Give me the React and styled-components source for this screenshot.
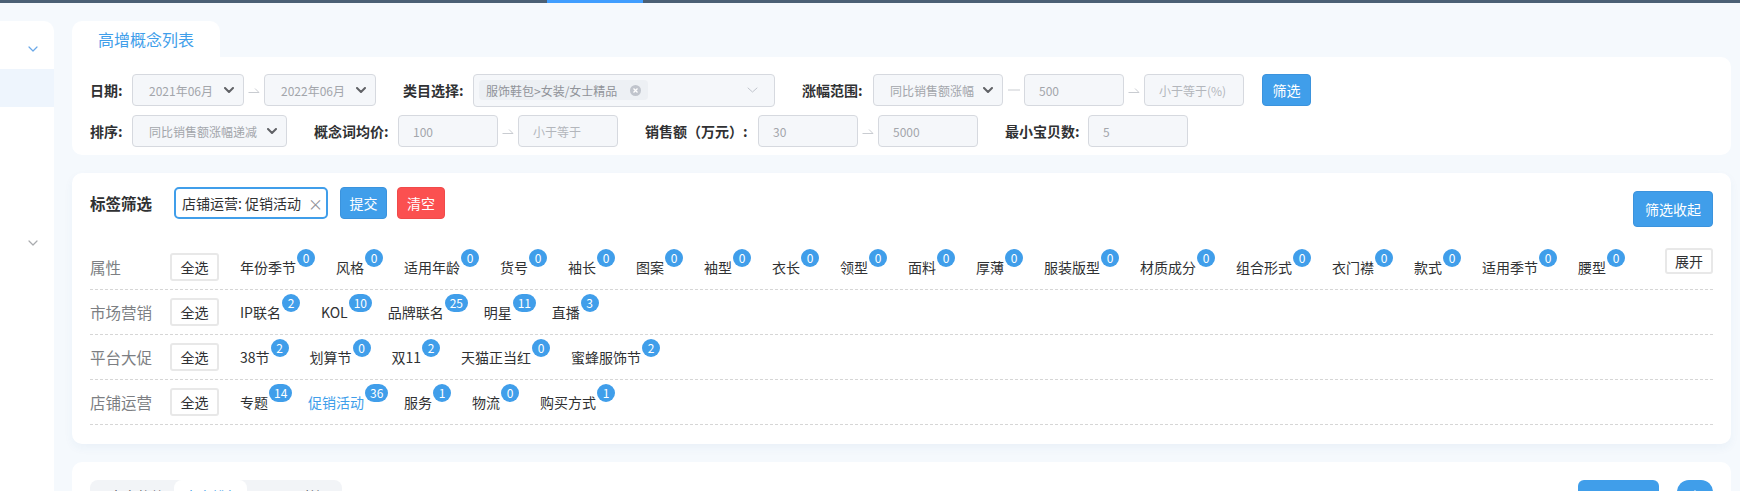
import React from 'react';
import styled, { createGlobalStyle } from 'styled-components';

const Global = createGlobalStyle`
  html, body { margin: 0; padding: 0; background: #f5f9fd; }
  body { font-family: "Noto Sans CJK SC", "Noto Sans", sans-serif; overflow: hidden; }
  * { box-sizing: border-box; }
`;

const Page = styled.div`
  width: 1740px;
  height: 491px;
  overflow: hidden;
  display: flex;
  flex-direction: column;
  background: #f5f9fd;
`;

const TopBar = styled.div`
  height: 3px;
  flex-shrink: 0;
  display: flex;
  background: #4b6075;
`;

const TopBarSeg = styled.div`
  width: ${p => p.$w}px;
  background: ${p => (p.$active ? '#409eff' : 'transparent')};
`;

const Body = styled.div`
  flex: 1;
  display: flex;
  gap: 18px;
  padding: 18px 9px 0 0;
  min-height: 0;
`;

const Sidebar = styled.div`
  width: 54px;
  flex-shrink: 0;
  background: #fff;
  border-top-right-radius: 10px;
  display: flex;
  flex-direction: column;
`;

const SideRow = styled.div`
  height: ${p => p.$h}px;
  flex-shrink: 0;
  padding-top: ${p => p.$pt || 0}px;
  padding-right: 16px;
  display: flex;
  align-items: center;
  justify-content: flex-end;
  background: ${p => (p.$active ? '#eef5fd' : 'transparent')};
`;

const Main = styled.div`
  flex: 1;
  display: flex;
  flex-direction: column;
  min-width: 0;
  & > * { flex-shrink: 0; }
`;

const Tab = styled.div`
  align-self: flex-start;
  width: 148px;
  height: 36px;
  background: #fff;
  border-radius: 10px 10px 0 0;
  display: flex;
  align-items: center;
  justify-content: center;
  color: #409eea;
  font-size: 16px;
`;

const FilterPanel = styled.div`
  background: #fff;
  border-radius: 0 10px 10px 10px;
  padding: 17px 18px 8px;
  display: flex;
  flex-direction: column;
  gap: 9px;
`;

const FormRow = styled.div`
  display: flex;
  align-items: center;
  height: 32px;
  gap: 27px;
`;

const Field = styled.div`
  display: flex;
  align-items: center;
  gap: 8px;
`;

const Label = styled.span`
  width: ${p => p.$w}px;
  flex-shrink: 0;
  font-size: 14px;
  font-weight: 700;
  color: #303133;
  white-space: nowrap;
`;

const Range = styled.div`
  display: flex;
  align-items: center;
`;

const Joiner = styled.span`
  width: ${p => p.$w || 20}px;
  display: flex;
  align-items: center;
  justify-content: center;
`;

const SelectBox = styled.div`
  width: ${p => p.$w}px;
  height: 32px;
  border: 1px solid #d6d9df;
  border-radius: 4px;
  background: #f5f7fa;
  display: flex;
  align-items: center;
  justify-content: space-between;
  padding: 0 9px 0 16px;
  font-size: 12px;
  color: #a3a6ab;
  white-space: nowrap;
`;

const InputBox = styled.div`
  width: 100px;
  height: 32px;
  border: 1px solid #d6d9df;
  border-radius: 4px;
  background: #f5f7fa;
  display: flex;
  align-items: center;
  padding-left: 14px;
  font-size: 12px;
  color: ${p => (p.$placeholder ? '#b3b6bc' : '#a3a6ab')};
  white-space: nowrap;
`;

const CategoryBox = styled.div`
  width: 302px;
  height: 33px;
  border: 1px solid #d6d9df;
  border-radius: 4px;
  background: #f5f7fa;
  display: flex;
  align-items: center;
  justify-content: space-between;
  padding: 0 16px 0 5px;
`;

const CatTag = styled.span`
  height: 20px;
  display: inline-flex;
  align-items: center;
  gap: 13px;
  padding: 0 7px;
  background: #edf0f4;
  border-radius: 4px;
  font-size: 12px;
  color: #909399;
  white-space: nowrap;
`;

const PrimaryBtn = styled.button`
  width: ${p => p.$w}px;
  height: ${p => p.$h}px;
  margin-left: ${p => p.$ml || 0}px;
  margin-top: ${p => p.$mt || 0}px;
  border: 1px solid ${p => (p.$danger ? '#f04a4a' : '#3b93dd')};
  border-radius: 4px;
  background: ${p => (p.$danger ? '#fb5050' : '#409eea')};
  color: #fff;
  font-family: inherit;
  font-size: 14px;
  padding: 0;
  display: flex;
  align-items: center;
  justify-content: center;
  cursor: pointer;
  flex-shrink: 0;
`;

const TagPanel = styled.div`
  margin-top: 18px;
  background: #fff;
  border-radius: 10px;
  padding: 14px 18px 19px;
  box-shadow: 0 4px 10px rgba(40, 90, 150, 0.05);
`;

const TagHeader = styled.div`
  display: flex;
  align-items: flex-start;
  justify-content: space-between;
`;

const HeaderLeft = styled.div`
  display: flex;
  align-items: center;
  height: 32px;
`;

const Title = styled.span`
  font-size: 15.5px;
  font-weight: 700;
  color: #303133;
  margin-right: 22px;
`;

const Chip = styled.div`
  width: 154px;
  height: 32px;
  border: 2px solid #409eea;
  border-radius: 5px;
  display: flex;
  align-items: center;
  padding: 0 6px;
  font-size: 14px;
  color: #303133;
  white-space: nowrap;
`;

const ChipClose = styled.span`
  margin-left: 7px;
  color: #909399;
  font-size: 15px;
`;

const Rows = styled.div`
  margin-top: 18px;
  display: flex;
  flex-direction: column;
`;

const TagRow = styled.div`
  display: flex;
  align-items: center;
  padding: 8px 0;
  border-bottom: 1px dashed #d6d6d6;
`;

const RowLabel = styled.span`
  width: 80px;
  flex-shrink: 0;
  font-size: 15.5px;
  color: #7d7f83;
  white-space: nowrap;
`;

const GhostBtn = styled.button`
  width: ${p => p.$w}px;
  height: ${p => p.$h}px;
  border: 2px solid #e8e8e8;
  border-radius: 3px;
  background: #fff;
  font-family: inherit;
  font-size: 14px;
  color: #303133;
  padding: 0;
  display: flex;
  align-items: center;
  justify-content: center;
  flex-shrink: 0;
  margin-right: ${p => p.$mr || 0}px;
  align-self: ${p => (p.$top ? 'flex-start' : 'center')};
  margin-top: ${p => (p.$top ? '-5px' : '0')};
`;

const Items = styled.div`
  flex: 1;
  display: flex;
  flex-wrap: wrap;
  align-items: center;
`;

const TagItem = styled.span`
  position: relative;
  font-size: 14px;
  line-height: 20px;
  margin-right: 40px;
  white-space: nowrap;
  color: ${p => (p.$active ? '#409eea' : '#303133')};
`;

const Badge = styled.sup`
  position: absolute;
  left: calc(100% + 1px);
  top: -8px;
  height: 18px;
  min-width: 18px;
  padding: 0 5px;
  border-radius: 9px;
  background: #409eea;
  color: #fff;
  font-size: 12px;
  line-height: 18px;
  text-align: center;
  vertical-align: baseline;
`;

const ChartPanel = styled.div`
  margin-top: 18px;
  height: 120px;
  background: #fff;
  border-radius: 10px 10px 0 0;
  padding: 18px;
  display: flex;
  align-items: flex-start;
  justify-content: space-between;
`;

const Segmented = styled.div`
  width: 252px;
  height: 32px;
  background: #f2f4f7;
  border-radius: 8px;
  display: flex;
  align-items: center;
  padding-left: 10px;
`;

const SegTab = styled.span`
  height: 32px;
  display: flex;
  align-items: center;
  padding: 0 ${p => p.$pr || 9}px 0 ${p => p.$pl || 9}px;
  border-radius: 8px;
  font-size: 14px;
  background: ${p => (p.$active ? '#fff' : 'transparent')};
  color: ${p => (p.$active ? '#409eea' : '#606266')};
  white-space: nowrap;
`;

const RightBtns = styled.div`
  display: flex;
  gap: 18px;
`;

const BlueBlock = styled.div`
  width: ${p => p.$w}px;
  height: ${p => p.$h}px;
  background: #409eea;
  border-radius: ${p => p.$r}px;
  color: #fff;
  display: flex;
  align-items: center;
  justify-content: center;
  font-size: 14px;
`;

const Chevron = ({ color = '#606266', w = 10, h = 6, sw = 2 }) => (
  <svg width={w} height={h} viewBox={`0 0 ${w} ${h}`} fill="none">
    <path d={`M1 1 L${w / 2} ${h - 1} L${w - 1} 1`} stroke={color} strokeWidth={sw} strokeLinecap="round" strokeLinejoin="round" />
  </svg>
);

const Harpoon = () => (
  <svg width="12" height="6" viewBox="0 0 12 6" fill="none">
    <path d="M0.5 5.5 H11 L7 1.5" stroke="#c9ccd1" strokeWidth="1" />
  </svg>
);

const Dash = () => (
  <svg width="12" height="2" viewBox="0 0 12 2">
    <path d="M0 1 H12" stroke="#c9ccd1" strokeWidth="1" />
  </svg>
);

const CloseCircle = () => (
  <svg width="11" height="11" viewBox="0 0 11 11">
    <circle cx="5.5" cy="5.5" r="5.5" fill="#c0c4cc" />
    <path d="M3.5 3.5 L7.5 7.5 M7.5 3.5 L3.5 7.5" stroke="#fff" strokeWidth="1.3" />
  </svg>
);

const DownloadIcon = () => (
  <svg width="16" height="16" viewBox="0 0 16 16" fill="none">
    <path d="M8 1 V11 M4 7 L8 11 L12 7 M2 14 H14" stroke="#fff" strokeWidth="1.6" strokeLinecap="round" strokeLinejoin="round" />
  </svg>
);

const tagRows = [
  {
    label: '属性',
    expand: true,
    items: [
      ['年份季节', 0], ['风格', 0], ['适用年龄', 0], ['货号', 0], ['袖长', 0], ['图案', 0],
      ['袖型', 0], ['衣长', 0], ['领型', 0], ['面料', 0], ['厚薄', 0], ['服装版型', 0],
      ['材质成分', 0], ['组合形式', 0], ['衣门襟', 0], ['款式', 0], ['适用季节', 0], ['腰型', 0],
    ],
  },
  {
    label: '市场营销',
    items: [['IP联名', 2], ['KOL', 10], ['品牌联名', 25], ['明星', 11], ['直播', 3]],
  },
  {
    label: '平台大促',
    items: [['38节', 2], ['划算节', 0], ['双11', 2], ['天猫正当红', 0], ['蜜蜂服饰节', 2]],
  },
  {
    label: '店铺运营',
    items: [['专题', 14], ['促销活动', 36, true], ['服务', 1], ['物流', 0], ['购买方式', 1]],
  },
];

export default function App() {
  return (
    <>
      <Global />
      <Page>
        <TopBar>
          <TopBarSeg $w={547} />
          <TopBarSeg $w={96} $active />
        </TopBar>
        <Body>
          <Sidebar>
            <SideRow $h={48} $pt={8}>
              <Chevron color="#6aa8e8" w={10} h={6} sw={1.2} />
            </SideRow>
            <SideRow $h={38} $active />
            <SideRow $h={112} />
            <SideRow $h={48}>
              <Chevron color="#a9abae" w={10} h={6} sw={1.2} />
            </SideRow>
          </Sidebar>
          <Main>
            <Tab>高增概念列表</Tab>
            <FilterPanel>
              <FormRow>
                <Field>
                  <Label $w={34}>日期:</Label>
                  <Range>
                    <SelectBox $w={112}>2021年06月<Chevron /></SelectBox>
                    <Joiner><Harpoon /></Joiner>
                    <SelectBox $w={112}>2022年06月<Chevron /></SelectBox>
                  </Range>
                </Field>
                <Field>
                  <Label $w={62}>类目选择:</Label>
                  <CategoryBox>
                    <CatTag>服饰鞋包&gt;女装/女士精品<CloseCircle /></CatTag>
                    <Chevron color="#c0c4cc" w={11} h={6} sw={1} />
                  </CategoryBox>
                </Field>
                <Field>
                  <Label $w={63}>涨幅范围:</Label>
                  <Range>
                    <SelectBox $w={130}>同比销售额涨幅<Chevron /></SelectBox>
                    <Joiner $w={21}><Dash /></Joiner>
                    <InputBox>500</InputBox>
                    <Joiner><Harpoon /></Joiner>
                    <InputBox $placeholder>小于等于(%)</InputBox>
                  </Range>
                </Field>
                <PrimaryBtn $w={49} $h={32} $ml={-9}>筛选</PrimaryBtn>
              </FormRow>
              <FormRow>
                <Field>
                  <Label $w={34}>排序:</Label>
                  <SelectBox $w={155}>同比销售额涨幅递减<Chevron /></SelectBox>
                </Field>
                <Field>
                  <Label $w={76}>概念词均价:</Label>
                  <Range>
                    <InputBox>100</InputBox>
                    <Joiner><Harpoon /></Joiner>
                    <InputBox $placeholder>小于等于</InputBox>
                  </Range>
                </Field>
                <Field>
                  <Label $w={105}>销售额（万元）:</Label>
                  <Range>
                    <InputBox>30</InputBox>
                    <Joiner><Harpoon /></Joiner>
                    <InputBox>5000</InputBox>
                  </Range>
                </Field>
                <Field>
                  <Label $w={75}>最小宝贝数:</Label>
                  <InputBox>5</InputBox>
                </Field>
              </FormRow>
            </FilterPanel>

            <TagPanel>
              <TagHeader>
                <HeaderLeft>
                  <Title>标签筛选</Title>
                  <Chip>店铺运营: 促销活动<ChipClose>×</ChipClose></Chip>
                  <PrimaryBtn $w={47} $h={32} $ml={12}>提交</PrimaryBtn>
                  <PrimaryBtn $w={48} $h={32} $ml={10} $danger>清空</PrimaryBtn>
                </HeaderLeft>
                <PrimaryBtn $w={80} $h={36} $mt={4}>筛选收起</PrimaryBtn>
              </TagHeader>
              <Rows>
                {tagRows.map(row => (
                  <TagRow key={row.label}>
                    <RowLabel>{row.label}</RowLabel>
                    <GhostBtn $w={49} $h={28} $mr={21}>全选</GhostBtn>
                    <Items>
                      {row.items.map(([name, count, active]) => (
                        <TagItem key={name} $active={active}>
                          {name}
                          <Badge>{count}</Badge>
                        </TagItem>
                      ))}
                    </Items>
                    {row.expand && <GhostBtn $w={48} $h={26} $top>展开</GhostBtn>}
                  </TagRow>
                ))}
              </Rows>
            </TagPanel>

            <ChartPanel>
              <Segmented>
                <SegTab>大盘趋势</SegTab>
                <SegTab $active $pl={10} $pr={7}>大盘排行</SegTab>
                <SegTab $pl={49}>对比</SegTab>
              </Segmented>
              <RightBtns>
                <BlueBlock $w={81} $h={40} $r={6}>导出数据</BlueBlock>
                <BlueBlock $w={36} $h={36} $r={12}><DownloadIcon /></BlueBlock>
              </RightBtns>
            </ChartPanel>
          </Main>
        </Body>
      </Page>
    </>
  );
}
